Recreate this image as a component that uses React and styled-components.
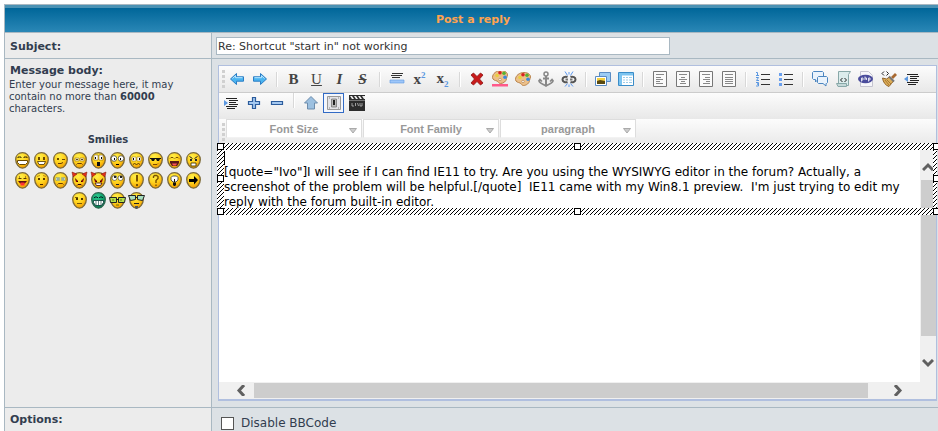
import React, { useState } from 'react';
import styled, { createGlobalStyle, css } from 'styled-components';

const GlobalStyle = createGlobalStyle`
  * {
    box-sizing: border-box;
  }

  body {
    margin: 0;
    overflow: hidden;
    background: #fff;
    color: #323d4f;
    font-family: Verdana, 'DejaVu Sans', sans-serif;
    font-size: 11px;
  }
`;

const line = '#a9b8c2';

const Panel = styled.form`
  width: 100%;
  margin: 4px 0 0 4px;
  border: 1px solid ${line};
  border-bottom: 0;
`;

const PanelTitle = styled.h1`
  height: 27px;
  margin: 0;
  border-top: 3px solid #4b92b4;
  background: linear-gradient(#006699, #2a87b6);
  color: #ffa34f;
  font-size: 11px;
  line-height: 24px;
  text-align: center;
`;

const Row = styled.div`
  display: grid;
  grid-template-columns: 207px minmax(0, 1fr);
  border-top: 1px solid ${line};
`;

const Side = styled.div`
  padding: ${({ $pad }) => $pad || '4px'};
  border-right: 1px solid ${line};
  background: #ececec;
`;

const Main = styled.div`
  padding: ${({ $pad }) => $pad || '4px'};
  background: #dce1e5;
`;

const FieldLabel = styled.label`
  display: block;
  padding-left: 1px;
  font-weight: bold;
  line-height: 16px;
`;

const Help = styled.p`
  margin: 0;
  font-size: 10px;
  line-height: 12px;
`;

const SubjectInput = styled.input`
  display: block;
  width: 454px;
  max-width: 100%;
  height: 18px;
  padding: 0 1px;
  border: 1px solid ${line};
  background: #fff;
  color: #333;
  font: inherit;
`;

const SmiliesTitle = styled.h2`
  margin: 19px 0 6px;
  font-size: 10px;
  line-height: 12px;
  text-align: center;
`;

const Smilies = styled.div`
  display: flex;
  flex-wrap: wrap;
  justify-content: center;
  gap: 3px 4px;
`;

const Smiley = styled.button`
  width: 15px;
  height: 17px;
  padding: 0;
  border: 0;
  background: none;

  svg {
    display: block;
    overflow: visible;
  }
`;

const Editor = styled.div`
  border: 1px solid #b0bfdf;
  border-bottom-width: 2px;
`;

const Toolbar = styled.div`
  display: flex;
  align-items: ${({ $top }) => ($top ? 'flex-start' : 'center')};
  height: ${({ $top }) => ($top ? '26px' : '27px')};
  background: linear-gradient(#fcfcfc, #e8e8e8);
  border-bottom: ${({ $ruled }) => ($ruled ? '1px solid #ccc' : '0')};
`;

const Grip = styled.span`
  align-self: center;
  width: 3px;
  height: 19px;
  margin: 0 0 0 3px;
  background: repeating-linear-gradient(#d0d0d0 0 3px, transparent 3px 5px);
`;

const Tool = styled.button`
  display: flex;
  align-items: center;
  justify-content: center;
  width: 21px;
  height: 20px;
  margin: 0 1px;
  padding: 0;
  border: 1px solid transparent;
  background: none;

  ${({ $active }) =>
    $active &&
    css`
      border-color: #316ac5;
      background: #f3f6fc;
    `}

  svg {
    flex: none;
  }
`;

const Separator = styled.span`
  width: 2px;
  height: 15px;
  margin: 0 4px 0 5px;
  background: linear-gradient(90deg, #d8d8d8 50%, #fff 50%);
`;

const Letter = styled.span`
  color: #444;
  font-family: 'Liberation Serif', serif;
  font-size: 15px;
  font-weight: ${({ $light }) => ($light ? 'normal' : 'bold')};
  font-style: ${({ $italic }) => ($italic ? 'italic' : 'normal')};
  line-height: 16px;
  text-decoration: ${({ $line }) => $line || 'none'};

  small {
    color: #5a97e0;
    font-size: 9px;
    line-height: 8px;
    vertical-align: ${({ $sub }) => ($sub ? 'sub' : 'super')};
  }
`;

const Combo = styled.div`
  position: relative;
  align-self: flex-start;
  margin-left: 1px;

  svg {
    position: absolute;
    right: 5px;
    bottom: 4px;
    pointer-events: none;
  }
`;

const ComboSelect = styled.select`
  display: block;
  width: 136px;
  height: 19px;
  padding: 0;
  border: 1px solid #ddd;
  border-bottom-color: #f2f2f2;
  border-radius: 0;
  background: #fff;
  color: #999;
  font-family: 'Liberation Sans', Arial, sans-serif;
  font-size: 11px;
  font-weight: bold;
  text-align-last: center;
  appearance: none;
`;

const Document = styled.div`
  position: relative;
  display: grid;
  grid-template-columns: minmax(0, 1fr) 16px;
  grid-template-rows: 236px 17px;
  background: #f0f0f0;
`;

const MessageArea = styled.textarea`
  display: block;
  width: 100%;
  height: 100%;
  padding: 4px 0 0 5px;
  border: 0;
  outline: 0;
  background: #fff;
  color: #000;
  font-family: Verdana, 'DejaVu Sans', sans-serif;
  font-size: 12px;
  line-height: 15px;
  white-space: pre-wrap;
  overflow: hidden;
  resize: none;
`;

const ScrollY = styled.div`
  display: flex;
  flex-direction: column;
  align-items: flex-end;
  padding: 16px 0 14px;
  gap: 9px;

  svg {
    margin-right: 2px;
  }
`;

const ScrollX = styled.div`
  display: flex;
  align-items: center;
  padding: 0 17px;
  gap: 9px;
`;

const ThumbY = styled.div`
  width: 15px;
  height: 156px;
  margin-bottom: auto;
  background: #cdcdcd;
`;

const ThumbX = styled.div`
  flex: 1;
  height: 15px;
  margin-right: 17px;
  background: #cdcdcd;
`;

const hatch = `url("data:image/svg+xml,%3Csvg xmlns='http://www.w3.org/2000/svg' width='4' height='4' shape-rendering='crispEdges'%3E%3Crect width='4' height='4' fill='%23fff'/%3E%3Cpath d='M3 0h1v1h-1zM2 1h1v1h-1zM1 2h1v1h-1zM0 3h1v1h-1z'/%3E%3C/svg%3E")`;

const Selection = styled.div`
  position: absolute;
  top: -3px;
  left: -2px;
  right: -1px;
  height: 72px;
  pointer-events: none;
`;

const Edge = styled.span`
  position: absolute;
  background: ${hatch};
  ${({ $side }) =>
    ({
      top: 'top: 0; left: 0; right: 0; height: 7px;',
      bottom: 'bottom: 0; left: 0; right: 0; height: 7px;',
      left: 'top: 0; bottom: 0; left: 0; width: 7px;',
      right: 'top: 0; bottom: 0; right: 0; width: 4px;',
    })[$side]}
`;

const Handle = styled.span`
  position: absolute;
  top: ${({ $y }) => ({ top: '0', middle: 'calc(50% - 4px)', bottom: 'calc(100% - 7px)' })[$y]};
  left: ${({ $x }) => ({ left: '0', center: 'calc(50% - 3px)', right: 'calc(100% - 4px)' })[$x]};
  width: 7px;
  height: 7px;
  border: 1px solid #000;
  background: #fff;
`;

const Caret = styled.span`
  position: absolute;
  top: 8px;
  left: 7px;
  width: 1px;
  height: 14px;
  background: #000;
`;

const CheckLabel = styled.label`
  display: flex;
  align-items: center;
  gap: 7px;
  font-size: 12px;
  line-height: 15px;
`;

const Checkbox = styled.input`
  width: 13px;
  height: 13px;
  margin: 0;
  border: 1px solid #555;
  background: #fff;
  appearance: none;

  &:checked {
    box-shadow: inset 0 0 0 2px #fff;
    background: #555;
  }
`;

/* smilies, drawn on a 15x17 grid */

const faces = {
  grin: (
    <>
      <path d="M3 6V5h3v1M9 6V5h3v1" stroke="#3a2a00" fill="none" />
      <path d="M2.500 8.500h10v2l-2 2h-6l-2-2z" fill="#fff" stroke="#6b4a00" />
    </>
  ),
  smile: (
    <>
      <path d="M4 5h2v3H4zM9 5h2v3H9z" fill="#6b4a00" />
      <path d="M3.500 9.500h8l-1.500 3H5z" fill="#fff" stroke="#4a3300" strokeWidth=".8" />
    </>
  ),
  wink: (
    <>
      <path d="M4 6h2v2H4zM9 7h3v1H9z" fill="#6b4a00" />
      <path d="M5 11.500h3l2-1" stroke="#6b3a00" fill="none" />
    </>
  ),
  sad: (
    <>
      <path d="M3 6h4v3H3zM8 6h4v3H8z" fill="#f4ecc0" stroke="#9a7a20" strokeWidth=".6" />
      <path d="M4 7.500h2M9 7.500h2" stroke="#5a4a20" />
      <path d="M4.500 12.500l1-1h4l1 1" stroke="#6b3a00" fill="none" />
    </>
  ),
  shocked: (
    <>
      <path d="M3 3h4v5H3zM8 3h4v5H8z" fill="#fff" stroke="#6b4a00" strokeWidth=".5" />
      <path d="M4 5h1v2H4zM10 5h1v2h-1z" fill="#000" />
      <path d="M6 10h3v4H6z" fill="#111" />
    </>
  ),
  eek: (
    <>
      <circle cx="4" cy="6.500" r="2.800" fill="#fff" stroke="#333" strokeWidth=".7" />
      <circle cx="11" cy="6.500" r="2.800" fill="#fff" stroke="#333" strokeWidth=".7" />
      <path d="M4 6h1v2H4zM10 6h1v2h-1zM6 12h3v1H6z" fill="#000" />
    </>
  ),
  confused: (
    <>
      <path d="M3 5h4v4H3zM8 5h4v4H8z" fill="#fff" stroke="#9a7a20" strokeWidth=".6" />
      <path d="M4 6h1v2H4zM10 6h1v2h-1z" fill="#000" />
      <path d="M4 12.500l1.500-1 2 1 2-1 1.500 1" stroke="#4a2a00" strokeWidth=".9" fill="none" />
    </>
  ),
  cool: (
    <>
      <path d="M2 6h11v1h-1l-1 2H9L8 7H7L6 9H4L3 7H2z" fill="#111" />
      <path d="M5 12.500h4l1-1" stroke="#6b3a00" strokeWidth=".9" fill="none" />
    </>
  ),
  laugh: (
    <>
      <path d="M3 6.500l1-1h2l1 1M8 6.500l1-1h2l1 1" stroke="#7a5200" fill="none" />
      <path d="M3 9h9v2l-2 3H5l-2-3z" fill="#5a1818" />
      <path d="M5 11.500h5l-1 2H6z" fill="#f55" />
    </>
  ),
  mad: (
    <>
      <path d="M3.500 4.500l3 2M11.500 4.500l-3 2" stroke="#222" />
      <path d="M4 7h2v2H4zM9 7h2v2H9z" fill="#222" />
      <path d="M5 11h5v3H5z" fill="#fff" stroke="#4a3a00" strokeWidth=".9" />
    </>
  ),
  razz: (
    <>
      <path d="M3.500 6.500h3M8.500 6.500h3M4 5h1M10 5h1" stroke="#5a3a00" />
      <path d="M3 9h9l-2 2.500H5z" fill="#5a1010" />
      <path d="M5.500 10.500h4v3h-4z" fill="#f33" />
    </>
  ),
  oops: (
    <>
      <path d="M4 6h2v2H4zM9 6h2v2H9z" fill="#5a3a00" />
      <path d="M3 4.500l3-1M9 3.500l3 1" stroke="#b07800" strokeWidth=".8" />
      <path d="M6 12h3v1H6z" fill="#4a2a00" />
    </>
  ),
  cry: (
    <>
      <path d="M3 5.500h3.500v3H3zM8.500 5.500H12v3H8.500z" fill="#d4eef4" stroke="#8a9a60" strokeWidth=".6" />
      <path d="M4 7h2M9 7h2" stroke="#5a6a50" />
      <path d="M4.500 12.500l1-1h4l1 1" stroke="#6b3a00" fill="none" />
    </>
  ),
  evil: (
    <>
      <path d="M0 0l1 5 4-3zM15 0l-1 5-4-3z" fill="#e0301a" stroke="#7a1808" strokeWidth=".5" />
      <path d="M3 6l3 3v1H4zM12 6L9 9v1h2z" fill="#300" />
      <path d="M4 9h1M10 9h1" stroke="#f00" />
      <path d="M5 13.500l1-1h3l1 1" stroke="#300" fill="none" />
    </>
  ),
  twisted: (
    <>
      <path d="M0 0l1 5 4-3zM15 0l-1 5-4-3z" fill="#e0301a" stroke="#7a1808" strokeWidth=".5" />
      <path d="M3 6l3 3v1H4zM12 6L9 9v1h2z" fill="#300" />
      <path d="M4 9h1M10 9h1" stroke="#f00" />
      <path d="M4 11h7l-1.500 2.500h-4z" fill="#fff" stroke="#300" strokeWidth=".8" />
    </>
  ),
  roll: (
    <>
      <circle cx="4.500" cy="6" r="2.500" fill="#fff" stroke="#333" strokeWidth=".6" />
      <circle cx="10.500" cy="6" r="2.500" fill="#fff" stroke="#333" strokeWidth=".6" />
      <path d="M4 4h2v2H4zM10 4h2v2h-2zM6 12h3v1H6z" fill="#222" />
    </>
  ),
  exclaim: <path d="M7 3h2v6l-1 1-1-1zM7 12h2v2H7z" fill="#7a5200" />,
  question: <path d="M5.500 6V4.500l1-1h2l1.500 1v2L8 8.500V11M8 12.500v1.500" stroke="#7a5200" strokeWidth="1.400" fill="none" />,
  idea: (
    <>
      <path d="M5.500 4h4l1.500 1.500v2.500L9 10H6L4 8V5.500z" fill="#fff" stroke="#333" strokeWidth=".8" />
      <path d="M6 10.500h3v2.500l-1 1H7l-1-1zM7 7h1v3H7z" fill="#111" />
    </>
  ),
  arrow: <path d="M3 7h5V4l4 4-4 4.500V10H3z" fill="#000" />,
  neutral: (
    <>
      <path d="M4 6h2v2H4zM9 6h2v2H9z" fill="#4a3300" />
      <path d="M3 5.500h3M5 11.500h5" stroke="#6b4a00" strokeWidth=".9" />
    </>
  ),
  green: (
    <>
      <path d="M3 6l1-1h2l1 1M8 6l1-1h2l1 1" stroke="#022" fill="none" />
      <path d="M2.500 8.500h10v2l-2 3h-6l-2-3z" fill="#fff" stroke="#033" strokeWidth=".8" />
      <path d="M5 9v4M7.500 9v4M10 9v4" stroke="#033" strokeWidth=".6" />
    </>
  ),
  geek: (
    <>
      <path d="M-.5 5.500h7v5h-6zM8.500 5.500h7l-1 5h-6z" fill="#b4e04a" stroke="#222" />
      <path d="M6 7.500h3" stroke="#111" />
      <path d="M3 7v2M11 7v2M6 13h3" stroke="#4a5a00" strokeWidth=".8" />
    </>
  ),
  professor: (
    <>
      <path d="M-.5 3.500h7v4l-5 1zM8.500 3.500h7l-2 5-5-1z" fill="#a8e0c0" stroke="#222" />
      <path d="M6 5.500h3M5 11.500h5" stroke="#222" />
      <path d="M6 14h3v2l-1 1H7l-1-1z" fill="#555" />
    </>
  ),
};

function Face({ kind }) {
  const green = kind === 'green';
  return (
    <svg width="15" height="17" viewBox="0 0 15 17" aria-hidden="true">
      <defs>
        <radialGradient id={`face-${kind}`} cx="40%" cy="25%" r="75%">
          <stop offset="0" stopColor={green ? '#2fc890' : '#fff04a'} />
          <stop offset=".55" stopColor={green ? '#0ea56c' : '#ffd01c'} />
          <stop offset="1" stopColor={green ? '#04774a' : '#f09a00'} />
        </radialGradient>
      </defs>
      <path
        d="M7.500.7C11.500.7 14.300 3.500 14.300 7.500S11 16.200 7.500 16.200.7 11.500.7 7.500 3.500.7 7.500.7z"
        fill={`url(#face-${kind})`}
        stroke={green ? '#2c6650' : '#7c6a3a'}
        strokeWidth="1.300"
      />
      {faces[kind]}
    </svg>
  );
}

/* toolbar icons, 16x16 */

const Arrow = ({ flip }) => (
  <g transform={flip ? 'matrix(-1 0 0 1 16 0)' : undefined}>
    <path d="M1.500 8l6-5.500v3.300h7v4.400h-7v3.300z" fill="#4ab4f0" stroke="#2a7cc4" strokeLinejoin="round" />
    <path d="M3.500 7.500l3-2.800v2h7" stroke="#b8e6ff" fill="none" />
  </g>
);

const Palette = ({ y = 0 }) => (
  <g transform={`translate(0 ${y})`}>
    <path d="M.5 8.500C.5 4.500 4.500 1.500 9 1.500c4 0 6.500 2 6.500 4.500 0 1.500-1 2-1 3.500 0 2.500-3 5-6 5-2 0-2-2-3.500-2.500S.5 11 .5 8.500z" fill="#ecc08a" stroke="#b8824a" />
    <circle cx="5" cy="6.500" r="1.800" fill="#e8d040" />
    <circle cx="8" cy="3.800" r="1.800" fill="#d82020" />
    <circle cx="12" cy="4.200" r="1.800" fill="#58b030" />
    <circle cx="13" cy="8.200" r="1.800" fill="#3a88e0" />
    <circle cx="8" cy="10.500" r="1.200" fill="#fff" stroke="#a8703a" strokeWidth=".6" />
  </g>
);

const Page = ({ rows }) => (
  <>
    <path d="M1.500.5h13v15h-13z" fill="#fafafa" stroke="#777" />
    <path d={rows} stroke="#888" />
  </>
);

const icons = {
  undo: <Arrow />,
  redo: <Arrow flip />,
  rule: (
    <>
      <path d="M3 2.500h11M2 4.500h11M3 6.500h8" stroke="#333" />
      <path d="M1 9h14v3H1z" fill="#9ec6f8" stroke="#5a97e0" strokeWidth=".6" />
    </>
  ),
  remove: <path d="M2 4l2.500-2L8 5.500 11.500 2 14 4l-3.500 4 3.500 4-2.500 2L8 10.500 4.500 14 2 12l3.500-4z" fill="#c81a1a" stroke="#8c1010" strokeWidth=".8" />,
  foreColor: (
    <>
      <Palette y={-2} />
      <path d="M0 13h16v2.500H0z" fill="#ff5a8a" />
    </>
  ),
  backColor: <Palette />,
  anchor: (
    <g fill="none" stroke="#888">
      <circle cx="8" cy="3" r="2" strokeWidth="1.500" />
      <path d="M8 5v9M5 7.500h6" strokeWidth="2" />
      <path d="M1.500 9v2C3 13 6 13.500 8 15c2-1.500 5-2 6.500-4V9M.5 10.500l1.500-2 2 2M12 10.500l2-2 1.500 2" strokeWidth="1.600" />
    </g>
  ),
  unlink: (
    <g fill="none">
      <path d="M6.500 6C4 5 1.500 6.500 1.500 8.500S4 12 6.500 11M9.500 6c2.500-1 5 .5 5 2.500S12 12 9.500 11" stroke="#555" strokeWidth="2" />
      <path d="M4.500 8.500h2.500M9 8.500h2.500" stroke="#777" strokeWidth="1.800" />
      <path d="M4 .5l2.500 4M8 1v2.500M12 .5l-2.500 4M4 15.500l2.500-3M8 13.500V16M12 15.500l-2.500-3" stroke="#5a97f0" />
    </g>
  ),
  image: (
    <>
      <path d="M4.500 1.500h11v9h-11z" fill="#9cccf4" stroke="#5a8cc4" />
      <path d="M.5 5.500h11v9H.5z" fill="#fff" stroke="#5a8cc4" />
      <path d="M2 7h8v3H2z" fill="#f4d040" />
      <path d="M2 10l3-1 5 1v3H2z" fill="#5a4a10" />
    </>
  ),
  table: (
    <>
      <path d="M.5 1.500h15v13H.5z" fill="#fff" stroke="#3a8cc8" />
      <path d="M1 2h14v2.500H1zM1 4h3v10H1z" fill="#7cc4f0" />
      <path d="M5 6.500h2M8 6.500h2M11 6.500h3M5 9h2M8 9h2M11 9h3M5 11.500h2M8 11.500h2M11 11.500h3" stroke="#9ccdea" />
    </>
  ),
  left: <Page rows="M4 3.500h8M4 6.500h5M4 8.500h7M4 10.500h4M4 12.500h7" />,
  center: <Page rows="M4 3.500h8M6 6.500h4M4 8.500h8M6 10.500h4M5 12.500h6" />,
  right: <Page rows="M4 3.500h8M7 6.500h5M5 8.500h7M8 10.500h4M5 12.500h7" />,
  justify: <Page rows="M4 3.500h8M4 6.500h8M4 8.500h8M4 10.500h8M4 12.500h8" />,
  numbers: (
    <>
      <path d="M6 3.500h9M6 8.500h9M6 13.500h9" stroke="#333" />
      <path d="M1 1.500h1.500V4M1 4.500h3M1 6.500h2.500l-2 3H4M1 11.500h2.500v1.500H2h1.500V15H1" stroke="#5a97e0" fill="none" />
    </>
  ),
  bullets: (
    <>
      <path d="M6 3.500h9M6 8.500h9M6 13.500h9" stroke="#333" />
      <path d="M1 2h3v3H1zM1 7h3v3H1zM1 12h3v3H1z" fill="#6aa0ee" />
    </>
  ),
  quote: (
    <g fill="#eaf3fc" stroke="#4c86c0" strokeLinejoin="round">
      <path d="M1.500.5h9l1 1v6l-1 1H6l-2.500 2.500V8.500h-2l-1-1v-6z" />
      <path d="M6.500 5.500h8l1 1v5l-1 1H14V15l-3-2.500H6.500l-1-1v-5z" />
    </g>
  ),
  code: (
    <>
      <path d="M3.500.5h12l-2 3v11h-11l1-2z" fill="#dcecec" stroke="#88a8a8" />
      <path d="M1.500 12.500h10v3H3z" fill="#c4d8d8" stroke="#88a8a8" />
      <path d="M7.500 7L5.500 9l2 2M9.500 7l2 2-2 2" stroke="#222" fill="none" />
    </>
  ),
  php: (
    <>
      <path d="M2.500.5h8l4 4v11h-12z" fill="#f6f6fa" stroke="#c4c4d0" />
      <ellipse cx="7.500" cy="8" rx="7.500" ry="4.200" fill="#4a4c9c" />
      <path d="M3.500 10.500V7h1.500v2H3.500M7 5.500V9M7 7h1.500v2M10.500 10.500V7H12v2h-1.500" stroke="#fff" strokeWidth=".8" fill="none" />
    </>
  ),
  clean: (
    <>
      <path d="M15 3l-4 4" stroke="#a86830" strokeWidth="2.800" />
      <path d="M1.500 7l4 1 3-2 4 4-2 2.500L8 15.500C4.500 14.500 2 11 1.500 7z" fill="#dcae58" stroke="#8a5a20" strokeWidth=".9" />
      <path d="M4 9l4 5M6 9l4 4" stroke="#9a6a28" strokeWidth=".8" />
      <path d="M8 5.500l5 5" stroke="#777" strokeWidth="2" />
      <path d="M3 .5l-2 2 2 2M5.500.5l2 2-2 2" stroke="#222" fill="none" />
    </>
  ),
  outdent: (
    <>
      <path d="M3 3.500h11M6 5.500h9M6 7.500h7M6 9.500h9M3 11.500h11M4 13.500h8" stroke="#222" strokeWidth="1.200" />
      <path d="M0 8l4-3v6z" fill="#5a97e0" />
    </>
  ),
  indent: (
    <>
      <path d="M3 3.500h11M6 5.500h9M6 7.500h7M6 9.500h9M3 11.500h11M4 13.500h8" stroke="#222" strokeWidth="1.200" />
      <path d="M1 5l4 3-4 3z" fill="#5a97e0" />
    </>
  ),
  plus: <path d="M6.500 2.500h3v4h4v3h-4v4h-3v-4h-4v-3h4z" fill="#a4c8f0" stroke="#2c5c9c" strokeWidth="1.200" />,
  minus: <path d="M2.500 6.500h11v3h-11z" fill="#a4c8f0" stroke="#2c5c9c" strokeWidth="1.200" />,
  up: <path d="M8 1.500l6.500 6.500h-3v6h-7V8h-3z" fill="#9cc0e0" stroke="#6c8cac" />,
  switch: (
    <>
      <path d="M1.500 1.500h13v13h-13z" fill="#e4e4e8" stroke="#999" />
      <path d="M5.500 4h5v8h-5z" fill="#bbb" stroke="#777" strokeWidth=".8" />
      <path d="M7 5h2v5H7z" fill="#222" />
      <path d="M3 3h1M12 3h1M3 13h1M12 13h1" stroke="#888" />
    </>
  ),
  video: (
    <>
      <path d="M0 0h16v16H0z" fill="#2c2c2c" />
      <path d="M1 1l2 3h2L3 1zM5 1l2 3h2L7 1zM9 1l2 3h2l-2-3zM13 1l2 3h1V1z" fill="#eee" />
      <path d="M0 5.500h16" stroke="#777" />
      <path d="M3 8v3h2M6.500 8v3M8.500 8l1 3M11 8v3h2V8" stroke="#bbb" strokeWidth=".8" fill="none" />
    </>
  ),
};

function Icon({ name }) {
  return (
    <svg width="16" height="16" viewBox="0 0 16 16" aria-hidden="true">
      {icons[name]}
    </svg>
  );
}

const letters = {
  bold: <Letter>B</Letter>,
  underline: <Letter $light $line="underline">U</Letter>,
  italic: <Letter $italic>I</Letter>,
  strike: <Letter $italic $line="line-through">S</Letter>,
  superscript: <Letter>x<small>2</small></Letter>,
  subscript: <Letter $sub>x<small>2</small></Letter>,
};

const firstBar = [
  ['undo', 'redo'],
  ['bold', 'underline', 'italic', 'strike'],
  ['rule', 'superscript', 'subscript'],
  ['remove', 'foreColor', 'backColor', 'anchor', 'unlink'],
  ['image', 'table'],
  ['left', 'center', 'right', 'justify'],
  ['numbers', 'bullets'],
  ['quote', 'code', 'php', 'clean', 'outdent'],
];

const secondBar = [
  ['indent', 'plus', 'minus'],
  ['up', 'switch', 'video'],
];

const message = `
[quote="Ivo"]I will see if I can find IE11 to try. Are you using the WYSIWYG editor in the forum? Actually, a
screenshot of the problem will be helpful.[/quote]  IE11 came with my Win8.1 preview.  I'm just trying to edit my
reply with the forum built-in editor.`;

function ToolGroups({ groups, active }) {
  return groups.map((group, i) => (
    <React.Fragment key={group[0]}>
      {i > 0 && <Separator />}
      {group.map((name) => (
        <Tool key={name} type="button" aria-label={name} $active={name === active}>
          {letters[name] || <Icon name={name} />}
        </Tool>
      ))}
    </React.Fragment>
  ));
}

function Chevron({ d, tall }) {
  return (
    <svg width={tall ? 9 : 12} height={tall ? 11 : 9} viewBox={tall ? '0 0 9 11' : '0 0 12 9'} aria-hidden="true">
      <path d={d} fill="none" stroke="#606060" strokeWidth="3" />
    </svg>
  );
}

export default function App() {
  const [subject, setSubject] = useState('Re: Shortcut "start in" not working');
  const [noBBCode, setNoBBCode] = useState(false);

  return (
    <>
      <GlobalStyle />
      <Panel>
        <PanelTitle>Post a reply</PanelTitle>

        <Row>
          <Side $pad="6px 4px 3px">
            <FieldLabel htmlFor="subject">Subject:</FieldLabel>
          </Side>
          <Main $pad="4px 4px 3px">
            <SubjectInput id="subject" value={subject} onChange={(e) => setSubject(e.target.value)} />
          </Main>
        </Row>

        <Row>
          <Side>
            <FieldLabel htmlFor="message">Message body:</FieldLabel>
            <Help>
              Enter your message here, it may contain no more than <b>60000</b> characters.
            </Help>
            <SmiliesTitle>Smilies</SmiliesTitle>
            <Smilies>
              {Object.keys(faces).map((kind) => (
                <Smiley key={kind} type="button" aria-label={kind}>
                  <Face kind={kind} />
                </Smiley>
              ))}
            </Smilies>
          </Side>
          <Main $pad="6px 4px 6px 6px">
            <Editor>
              <Toolbar $ruled>
                <Grip />
                <ToolGroups groups={firstBar} />
              </Toolbar>
              <Toolbar $top>
                <ToolGroups groups={secondBar} active="switch" />
              </Toolbar>
              <Toolbar>
                <Grip />
                {['Font Size', 'Font Family', 'paragraph'].map((name) => (
                  <Combo key={name}>
                    <ComboSelect aria-label={name}>
                      <option>{name}</option>
                    </ComboSelect>
                    <svg width="8" height="6" viewBox="0 0 8 6" aria-hidden="true">
                      <path d="M.5.5h7L4 5z" fill="#ccc" stroke="#aaa" />
                    </svg>
                  </Combo>
                ))}
              </Toolbar>
              <Document>
                <MessageArea id="message" defaultValue={message} spellCheck={false} />
                <ScrollY>
                  <Chevron d="M1 8l5-5 5 5" />
                  <ThumbY />
                  <Chevron d="M1 1l5 5 5-5" />
                </ScrollY>
                <ScrollX>
                  <Chevron tall d="M8 0L3 5.500l5 5.500" />
                  <ThumbX />
                  <Chevron tall d="M1 0l5 5.500L1 11" />
                </ScrollX>
                <Selection>
                  {['top', 'bottom', 'left', 'right'].map((side) => (
                    <Edge key={side} $side={side} />
                  ))}
                  {['top', 'middle', 'bottom'].map((y) =>
                    ['left', 'center', 'right'].map(
                      (x) => !(x === 'center' && y === 'middle') && <Handle key={x + y} $x={x} $y={y} />
                    )
                  )}
                  <Caret />
                </Selection>
              </Document>
            </Editor>
          </Main>
        </Row>

        <Row>
          <Side>
            <FieldLabel as="div">Options:</FieldLabel>
          </Side>
          <Main $pad="8px 9px 0">
            <CheckLabel>
              <Checkbox type="checkbox" checked={noBBCode} onChange={(e) => setNoBBCode(e.target.checked)} />
              Disable BBCode
            </CheckLabel>
          </Main>
        </Row>
      </Panel>
    </>
  );
}
